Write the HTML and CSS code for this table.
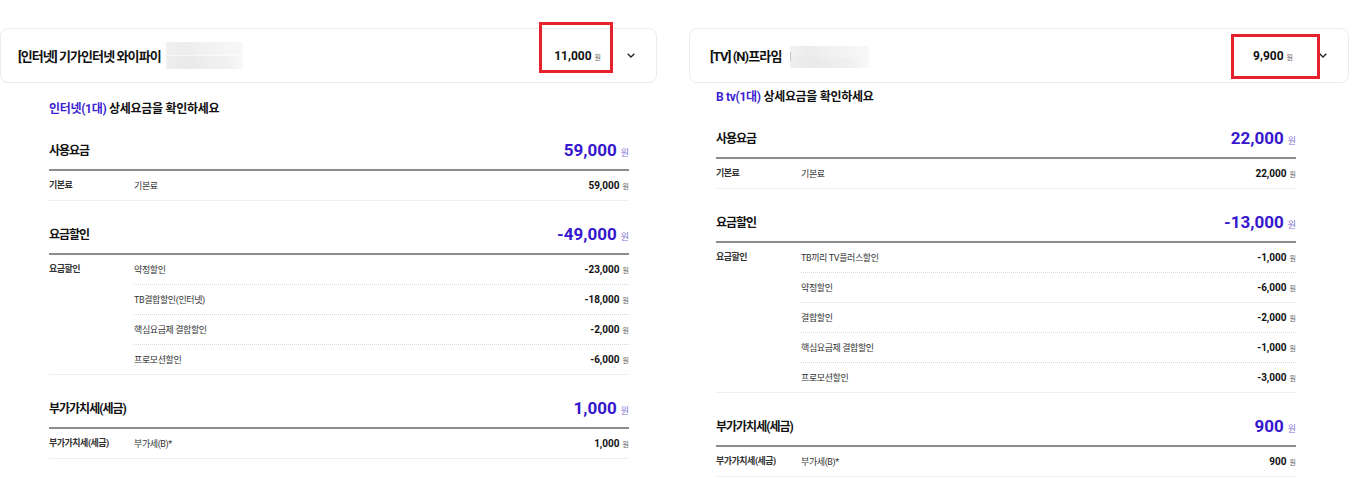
FILE: index.html
```html
<!DOCTYPE html>
<html lang="ko">
<head>
    <meta charset="UTF-8">
    <meta name="viewport" content="width=device-width, initial-scale=1.0">
    <title>상세요금 확인</title>
    <link rel="stylesheet" href="styles.css">
</head>
<body>

    <div class="panels">
        <!-- 인터넷 -->
        <section class="panel panel--internet">
            <div class="product-card">
                <span class="product-name">[인터넷] 기가인터넷 와이파이</span>
                <span class="masked"></span>
                <span class="product-price">11,000<em>원</em></span>
                <svg class="chevron" width="8" height="5" viewBox="0 0 8 5"><polyline points="0.7,0.7 4,4 7.3,0.7" fill="none" stroke="#222" stroke-width="1.3"/></svg>
                <span class="mark"></span>
            </div>

            <div class="detail">
                <h3 class="detail-title"><span class="accent">인터넷(1대)</span> 상세요금을 확인하세요</h3>

                <div class="fee-section">
                    <div class="fee-head">
                        <span>사용요금</span>
                        <span class="fee-total">59,000<em>원</em></span>
                    </div>
                    <div class="fee-row">
                        <span class="fee-cat">기본료</span>
                        <span class="fee-name">기본료</span>
                        <span class="fee-amount">59,000<em>원</em></span>
                    </div>
                </div>

                <div class="fee-section">
                    <div class="fee-head">
                        <span>요금할인</span>
                        <span class="fee-total">-49,000<em>원</em></span>
                    </div>
                    <div class="fee-group">
                        <span class="fee-cat">요금할인</span>
                        <div class="fee-items">
                            <div class="fee-item"><span class="fee-name">약정할인</span><span class="fee-amount">-23,000<em>원</em></span></div>
                            <div class="fee-item"><span class="fee-name">TB결합할인(인터넷)</span><span class="fee-amount">-18,000<em>원</em></span></div>
                            <div class="fee-item"><span class="fee-name">핵심요금제 결합할인</span><span class="fee-amount">-2,000<em>원</em></span></div>
                            <div class="fee-item"><span class="fee-name">프로모션할인</span><span class="fee-amount">-6,000<em>원</em></span></div>
                        </div>
                    </div>
                </div>

                <div class="fee-section">
                    <div class="fee-head">
                        <span>부가가치세(세금)</span>
                        <span class="fee-total">1,000<em>원</em></span>
                    </div>
                    <div class="fee-row">
                        <span class="fee-cat">부가가치세(세금)</span>
                        <span class="fee-name">부가세(B)*</span>
                        <span class="fee-amount">1,000<em>원</em></span>
                    </div>
                </div>
            </div>
        </section>

        <!-- TV -->
        <section class="panel panel--tv">
            <div class="product-card">
                <span class="product-name">[TV] (N)프라임</span>
                <span class="masked"></span>
                <span class="product-price">9,900<em>원</em></span>
                <svg class="chevron" width="8" height="5" viewBox="0 0 8 5"><polyline points="0.7,0.7 4,4 7.3,0.7" fill="none" stroke="#222" stroke-width="1.3"/></svg>
                <span class="mark"></span>
            </div>

            <div class="detail">
                <h3 class="detail-title"><span class="accent">B tv(1대)</span> 상세요금을 확인하세요</h3>

                <div class="fee-section">
                    <div class="fee-head">
                        <span>사용요금</span>
                        <span class="fee-total">22,000<em>원</em></span>
                    </div>
                    <div class="fee-row">
                        <span class="fee-cat">기본료</span>
                        <span class="fee-name">기본료</span>
                        <span class="fee-amount">22,000<em>원</em></span>
                    </div>
                </div>

                <div class="fee-section">
                    <div class="fee-head">
                        <span>요금할인</span>
                        <span class="fee-total">-13,000<em>원</em></span>
                    </div>
                    <div class="fee-group">
                        <span class="fee-cat">요금할인</span>
                        <div class="fee-items">
                            <div class="fee-item"><span class="fee-name">TB끼리 TV플러스할인</span><span class="fee-amount">-1,000<em>원</em></span></div>
                            <div class="fee-item"><span class="fee-name">약정할인</span><span class="fee-amount">-6,000<em>원</em></span></div>
                            <div class="fee-item"><span class="fee-name">결합할인</span><span class="fee-amount">-2,000<em>원</em></span></div>
                            <div class="fee-item"><span class="fee-name">핵심요금제 결합할인</span><span class="fee-amount">-1,000<em>원</em></span></div>
                            <div class="fee-item"><span class="fee-name">프로모션할인</span><span class="fee-amount">-3,000<em>원</em></span></div>
                        </div>
                    </div>
                </div>

                <div class="fee-section">
                    <div class="fee-head">
                        <span>부가가치세(세금)</span>
                        <span class="fee-total">900<em>원</em></span>
                    </div>
                    <div class="fee-row">
                        <span class="fee-cat">부가가치세(세금)</span>
                        <span class="fee-name">부가세(B)*</span>
                        <span class="fee-amount">900<em>원</em></span>
                    </div>
                </div>
            </div>
        </section>
    </div>

</body>
</html>
```

FILE: styles.css
```css
/* Global */
* {
    box-sizing: border-box;
}

body {
    margin: 0;
    background-color: #fff;
    color: #111;
    font-family: Roboto, "Noto Sans CJK KR", sans-serif;
}

em {
    font-style: normal;
}

/* 2단 레이아웃 */
.panels {
    display: grid;
    grid-template-columns: 657px 660px;
    column-gap: 32px;
    padding-top: 28px;
}

/* 상품 카드 */
.product-card {
    position: relative;
    display: flex;
    align-items: center;
    height: 55px;
    padding: 0 21px 0 17px;
    border: 1px solid #ebebeb;
    border-radius: 8px;
    background-color: #fff;
}

.panel--tv .product-card {
    padding-left: 20px;
}

.product-name {
    font-size: 13px;
    font-weight: 700;
    letter-spacing: -0.9px;
    color: #111;
}

.masked {
    width: 77px;
    height: 27px;
    margin-left: 5px;
    background:
        linear-gradient(90deg, #f1f1f1 0, #ececec 25%, #f0f0f0 45%, #f4f4f4 70%, #f8f8f8 100%) top / 100% 50% no-repeat,
        linear-gradient(90deg, #eeeeee 0, #e9e9e9 30%, #eeeeee 55%, #f1f1f1 80%, #f9f9f9 100%) bottom / 100% 50% no-repeat;
}

.panel--tv .masked {
    position: relative;
    width: 79px;
    height: 22px;
    margin-left: 9px;
    margin-top: 2px;
}

.panel--tv .masked::before {
    content: "";
    position: absolute;
    left: 0;
    top: 6px;
    width: 1px;
    height: 9px;
    background-color: #c4c4c4;
}

.product-price {
    margin-left: auto;
    margin-right: 26px;
    font-size: 12px;
    font-weight: 700;
    color: #111;
}

.product-price em,
.fee-amount em {
    margin-left: 3px;
    font-size: 7px;
    font-weight: 400;
    color: #666;
}

.chevron {
    display: block;
}

/* 캡처 표시용 빨간 박스 */
.mark {
    position: absolute;
    border: 3px solid #e6202d;
}

.panel--internet .mark {
    left: 538px;
    top: -7px;
    width: 74px;
    height: 51px;
}

.panel--tv .mark {
    left: 541px;
    top: 5px;
    width: 89px;
    height: 45px;
}

/* 상세요금 */
.detail {
    width: 580px;
}

.panel--internet .detail {
    margin: 18px 0 0 49px;
}

.panel--tv .detail {
    margin: 6px 0 0 27px;
}

.detail-title {
    margin: 0;
    font-size: 12px;
    line-height: 16px;
    font-weight: 700;
    letter-spacing: -0.3px;
    color: #111;
}

.accent {
    color: #3d1fd2;
}

.fee-section {
    margin-top: 22px;
}

.fee-head {
    display: flex;
    justify-content: space-between;
    align-items: center;
    height: 32px;
    padding-bottom: 6px;
    border-bottom: 2px solid #8c8c8c;
    font-size: 12px;
    line-height: 24px;
    font-weight: 700;
    letter-spacing: -1px;
}

.fee-total {
    font-size: 17px;
    font-weight: 700;
    letter-spacing: 0;
    color: #3617ce;
}

.fee-total em {
    margin-left: 4px;
    font-size: 9px;
    font-weight: 400;
    color: #8074d8;
}

.fee-row {
    display: grid;
    grid-template-columns: 85px 1fr auto;
    align-items: center;
    height: 30px;
    border-bottom: 1px solid #efefef;
}

.fee-cat {
    font-size: 9px;
    font-weight: 700;
    letter-spacing: -0.5px;
    color: #333;
    line-height: 29px;
}

.fee-name {
    font-size: 9px;
    letter-spacing: -0.4px;
    color: #333;
}

.fee-amount {
    font-size: 10px;
    font-weight: 700;
    color: #111;
}

.fee-group {
    display: grid;
    grid-template-columns: 85px 1fr;
    align-items: start;
    border-bottom: 1px solid #efefef;
}

.fee-item {
    display: flex;
    justify-content: space-between;
    align-items: center;
    height: 30px;
    border-bottom: 1px dotted #d6d6d6;
}

.fee-item:last-child {
    height: 29px;
    border-bottom: none;
}
```
